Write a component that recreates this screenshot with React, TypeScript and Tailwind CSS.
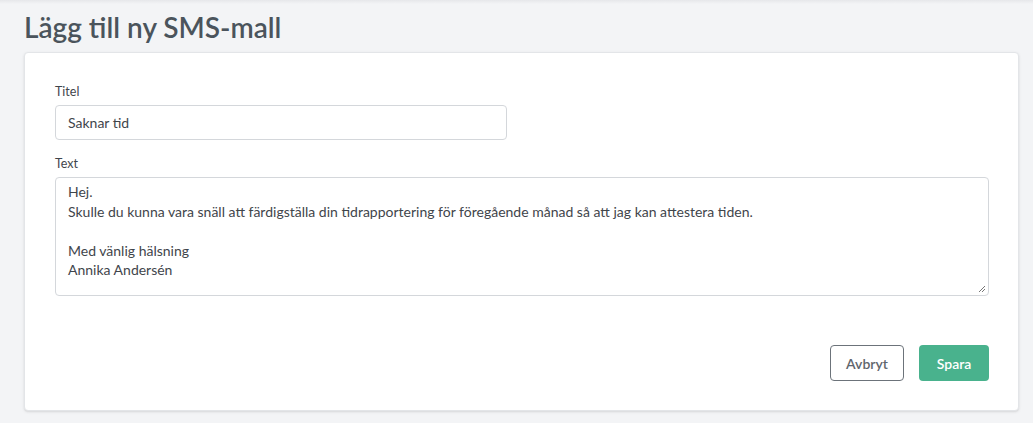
export default function App() {
  return (
    <div className="w-[1033px] h-[423px] bg-[#f3f4f6] overflow-hidden text-[#4a5056]" style={{ fontFamily: 'Lato, "Open Sans", sans-serif' }}>
      <div className="h-[4px] bg-gradient-to-b from-[#e6e7ea] to-[#f3f4f6]" />
      <h1 className="ml-[24px] mt-[6px] h-[42px] text-[28px] font-semibold text-[#4b545c] leading-[34px]">Lägg till ny SMS-mall</h1>
      <div className="ml-[24px] w-[995px] h-[359px] bg-white rounded-[4px] border border-[#e3e5e8] shadow-sm px-[30px] pt-[31px]">
        <label className="block text-[12.5px] text-[#3f454b] leading-[16px] mb-[5px]">Titel</label>
        <div className="w-[452px] h-[35px] border border-[#d4d7db] rounded-[4px] px-[12px] flex items-center text-[14px] text-[#3f454b]">Saknar tid</div>
        <label className="block text-[12.5px] text-[#3f454b] leading-[16px] mt-[16px] mb-[5px]">Text</label>
        <div className="relative w-[934px] h-[119px] border border-[#d4d7db] rounded-[4px] px-[12px] pt-[4px] text-[14px] leading-[19.5px] text-[#3f454b]">
          <div>Hej.</div>
          <div>Skulle du kunna vara snäll att färdigställa din tidrapportering för föregående månad så att jag kan attestera tiden.</div>
          <div>&nbsp;</div>
          <div>Med vänlig hälsning</div>
          <div>Annika Andersén</div>
          <svg className="absolute right-[2px] bottom-[2px]" width="8" height="8" viewBox="0 0 8 8"><path d="M7 1L1 7M7 4L4 7" stroke="#777" strokeWidth="1" /></svg>
        </div>
        <div className="flex justify-end gap-[15px] mt-[49px] w-[934px]">
          <button className="w-[74px] h-[36px] border border-[#6c737a] rounded-[4px] text-[14px] font-semibold text-[#5f666d]">Avbryt</button>
          <button className="w-[70px] h-[36px] bg-[#49b28d] rounded-[4px] text-[14px] font-semibold text-white">Spara</button>
        </div>
      </div>
    </div>
  );
}
